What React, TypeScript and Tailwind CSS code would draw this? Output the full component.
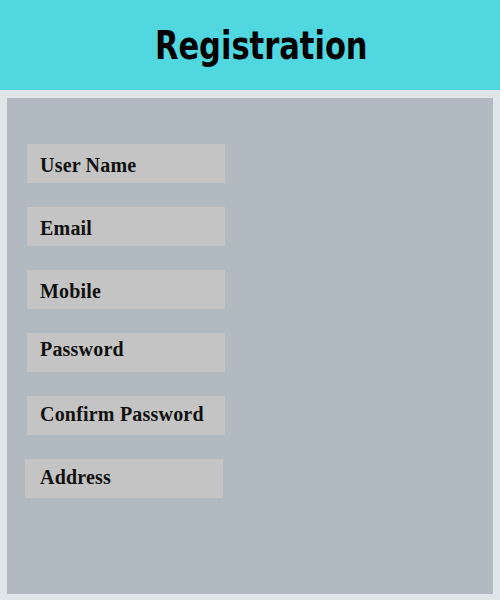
import React from 'react';

const fields = [
  { label: 'User Name', box: 'pt-[6px] pl-[13px]' },
  { label: 'Email', box: 'pt-[6px] pl-[13px]' },
  { label: 'Mobile', box: 'pt-[6px] pl-[13px]' },
  { label: 'Password', box: 'pt-[1px] pl-[13px]' },
  { label: 'Confirm Password', box: 'pt-[3px] pl-[13px]' },
  { label: 'Address', box: 'pt-[3px] pl-[15px] -ml-[2px]' },
];

const App = () => {
  return (
    <div className="w-[500px] h-[600px] bg-[#dfe6e9] flex flex-col">
      {/* Header */}
      <div className="h-[90px] bg-[#50d7e0] flex items-center justify-center pl-[22px]">
        <h1 className="text-[39px] font-bold text-black font-['DejaVu_Sans_Condensed','Liberation_Sans_Narrow',sans-serif] scale-x-[0.87] pt-[2px]">
          Registration
        </h1>
      </div>

      {/* Form panel */}
      <div className="flex-1 px-[7px] pt-[8px] pb-[6px]">
        <div className="h-full bg-[#b0bac0] pl-[20px] pt-[46px] flex flex-col gap-[24px]">
          {fields.map((f) => (
            <div
              key={f.label}
              className={`w-[198px] h-[39px] bg-[#c4c4c4] ${f.box} text-[20px] font-bold text-[#111] font-['Liberation_Serif',serif] tracking-[0.2px]`}
            >
              {f.label}
            </div>
          ))}
        </div>
      </div>
    </div>
  );
};

export default App;
